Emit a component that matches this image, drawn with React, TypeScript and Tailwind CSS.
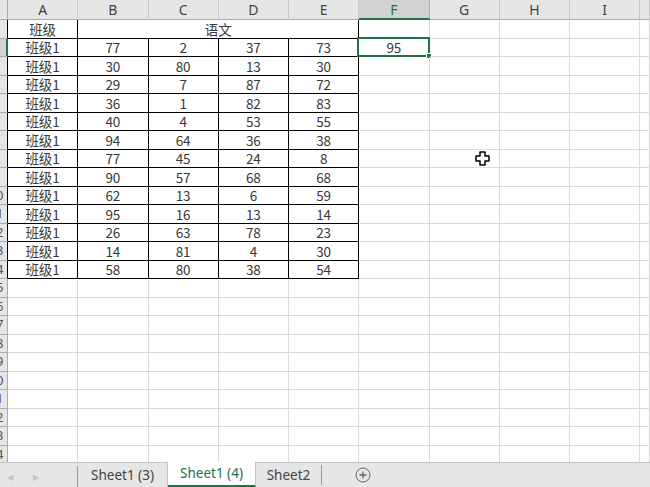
import { Fragment } from "react";

const letters = ["A", "B", "C", "D", "E", "F", "G", "H", "I", ""];

// rows 2..14, columns B..E
const scores = [
  [77, 2, 37, 73],
  [30, 80, 13, 30],
  [29, 7, 87, 72],
  [36, 1, 82, 83],
  [40, 4, 53, 55],
  [94, 64, 36, 38],
  [77, 45, 24, 8],
  [90, 57, 68, 68],
  [62, 13, 6, 59],
  [95, 16, 13, 14],
  [26, 63, 78, 23],
  [14, 81, 4, 30],
  [58, 80, 38, 54],
];

const ROWS = 24;

function Cell({
  row,
  col,
  children,
}: {
  row: number;
  col: number;
  children?: React.ReactNode;
}) {
  const inTable = row <= 14 && col <= 4;
  const selected = row === 2 && col === 5;
  return (
    <div
      className={
        "relative flex items-center justify-center border-r border-b text-[13.5px] text-[#383838] " +
        (inTable ? "border-black" : "border-[#dadada]")
      }
    >
      {children}
      {selected && (
        <div className="absolute -left-[2px] -top-[2px] -right-px -bottom-px border-2 border-[#217346]">
          <div className="absolute -right-[4px] -bottom-[4px] w-[6px] h-[6px] bg-[#217346] border border-white" />
        </div>
      )}
    </div>
  );
}

export default function App() {
  return (
    <div className="w-[650px] h-[487px] overflow-hidden flex flex-col bg-white font-['Noto_Sans_CJK_SC','Noto_Sans',sans-serif] relative">
      <div className="flex-1 overflow-hidden">
        <div className="grid grid-cols-[8px_repeat(9,70.25px)_1fr] grid-rows-[20px_repeat(24,18.5px)]">
          {/* column headers */}
          <div className="bg-[#e6e6e6] border-r border-b border-[#ababab]" />
          {letters.map((l, i) => (
            <div
              key={"h" + i}
              className={
                "flex items-center justify-center text-[14px] font-['Noto_Sans',sans-serif] border-r " +
                (i === 5
                  ? "bg-[#d2d2d2] text-[#217346] border-b-2 border-b-[#217346] border-r-[#ababab]"
                  : "bg-[#e6e6e6] text-[#444] border-b border-[#ababab] border-r-[#c8c8c8]")
              }
            >
              {l}
            </div>
          ))}

          {Array.from({ length: ROWS }, (_, k) => {
            const row = k + 1;
            // the row-number column is scrolled almost out of view
            const rowHead = (
              <div
                className={
                  "overflow-hidden border-b " +
                  (row === 2
                    ? "bg-[#d2d2d2] border-r-2 border-r-[#217346] border-b-[#ababab]"
                    : "bg-[#e6e6e6] border-r border-[#ababab]" +
                      (row <= 14 ? " border-r-black" : ""))
                }
              >
                <div className="w-[24px] -ml-[16px] h-full flex items-center justify-center text-[13px] text-[#555] font-['Noto_Sans',sans-serif]">
                  {row}
                </div>
              </div>
            );

            if (row === 1) {
              return (
                <Fragment key={row}>
                  {rowHead}
                  <Cell row={1} col={0}>
                    班级
                  </Cell>
                  <div className="col-span-4 flex items-center justify-center border-r border-b border-black text-[13.5px] text-[#383838]">
                    语文
                  </div>
                  {[5, 6, 7, 8, 9].map((c) => (
                    <Cell key={c} row={1} col={c} />
                  ))}
                </Fragment>
              );
            }

            const vals = scores[row - 2];
            return (
              <Fragment key={row}>
                {rowHead}
                {letters.map((_, c) => {
                  let text: React.ReactNode = null;
                  if (vals && c === 0) text = "班级1";
                  else if (vals && c >= 1 && c <= 4) text = vals[c - 1];
                  else if (row === 2 && c === 5) text = 95;
                  return (
                    <Cell key={c} row={row} col={c}>
                      {text}
                    </Cell>
                  );
                })}
              </Fragment>
            );
          })}
        </div>
      </div>

      {/* sheet tabs */}
      <div className="h-[25px] shrink-0 flex bg-[#e6e6e6] border-t border-[#c3c3c3] text-[13.5px] font-['Noto_Sans',sans-serif] text-[#444]">
        <div className="w-[78px] flex items-center border-r border-[#999] mt-[3px]">
          <span className="ml-[7px] text-[8px] text-[#c4c4c4]">◀</span>
          <span className="ml-[20px] text-[8px] text-[#c4c4c4]">▶</span>
        </div>
        <div className="w-[90px] flex items-center justify-center border-r border-[#c3c3c3]">
          Sheet1 (3)
        </div>
        <div className="w-[88px] -mt-px flex items-center justify-center bg-white text-[#217346] border-b-2 border-[#217346] border-r border-r-[#c3c3c3]">
          Sheet1 (4)
        </div>
        <div className="w-[66px] flex items-center justify-center border-r border-[#999] my-[2px]">
          Sheet2
        </div>
        <div className="ml-[33px] flex items-center">
          <svg width="16" height="16" viewBox="0 0 16 16" fill="none" stroke="#666" strokeWidth="1">
            <circle cx="8" cy="8" r="7" />
            <path d="M8 4.5v7M4.5 8h7" strokeWidth="1.3" />
          </svg>
        </div>
      </div>

      {/* mouse pointer */}
      <svg
        className="absolute left-[475px] top-[151px]"
        width="15"
        height="15"
        viewBox="0 0 15 15"
      >
        <path
          d="M5 1h5v4h4v5h-4v4H5v-4H1V5h4z"
          fill="white"
          stroke="black"
          strokeWidth="1.5"
          strokeLinejoin="round"
        />
      </svg>
    </div>
  );
}
